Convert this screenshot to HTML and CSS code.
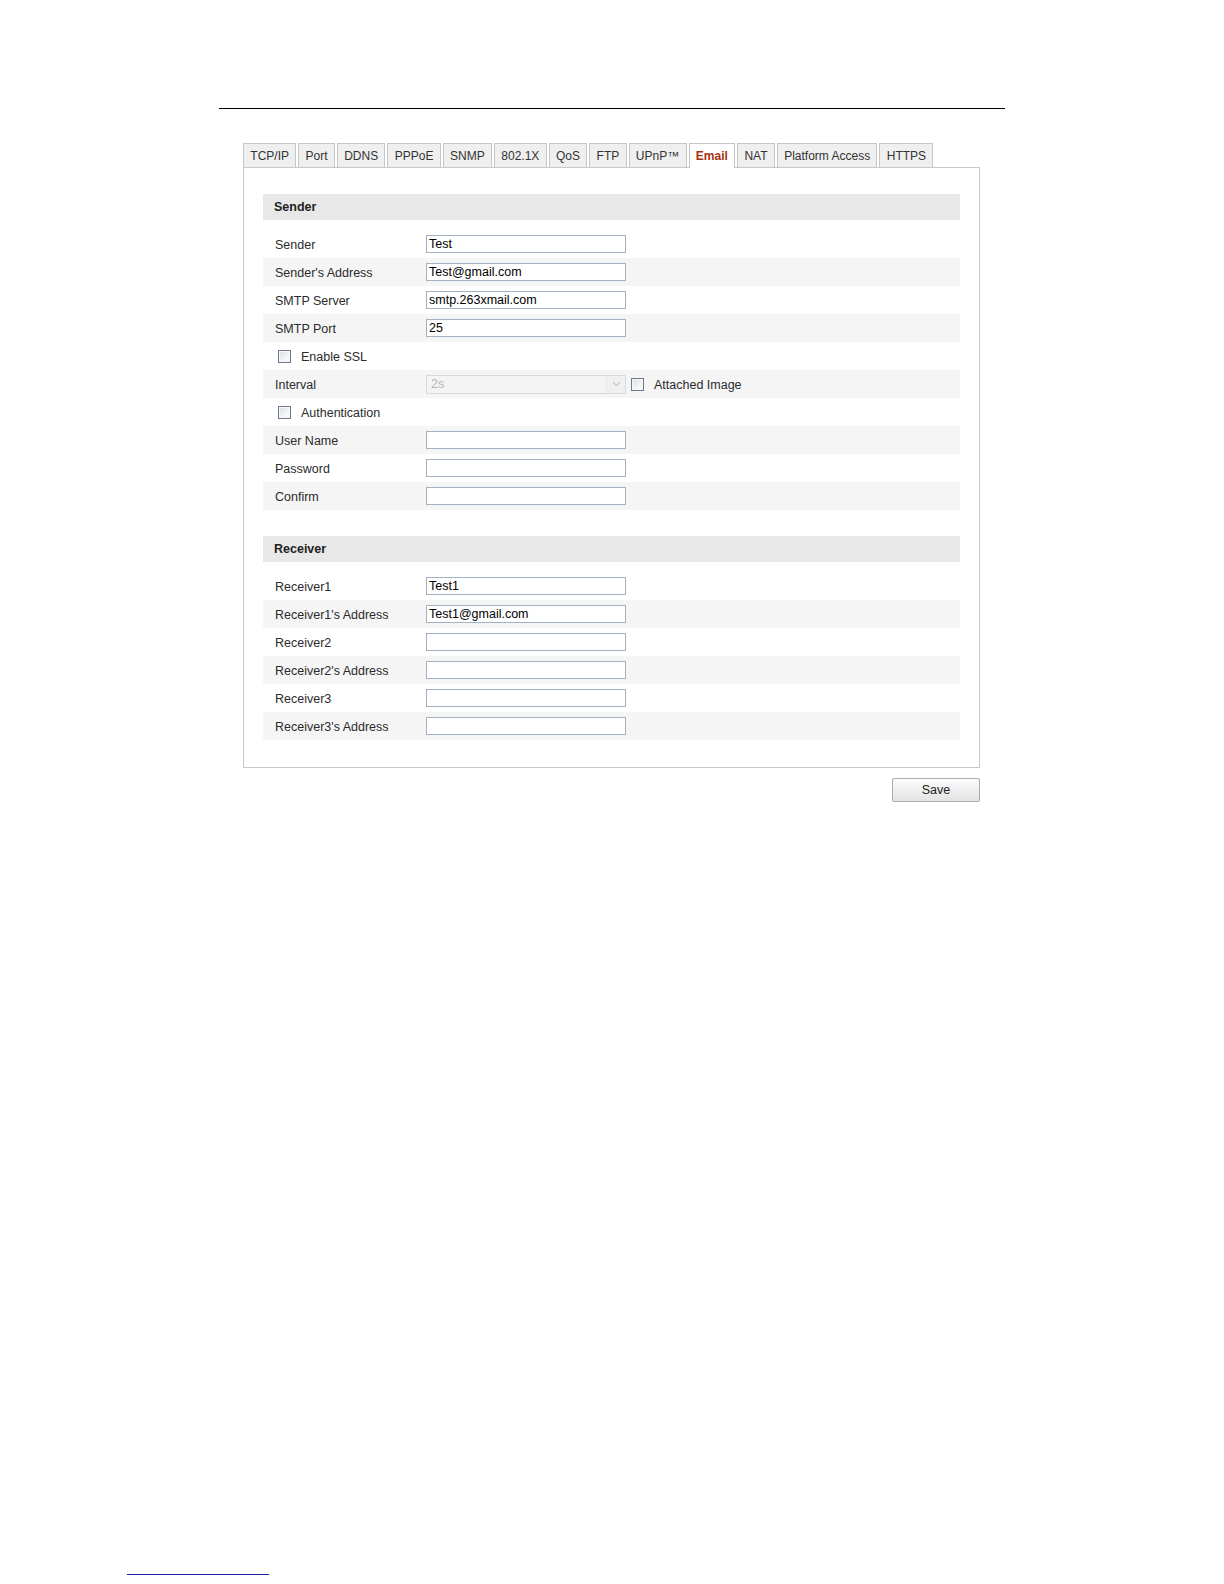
FILE: index.html
```html
<!DOCTYPE html>
<html lang="en">
<head>
<meta charset="utf-8">
<title>Email</title>
<link rel="stylesheet" href="styles.css">
</head>
<body>
<div class="page">
  <div class="top-rule"></div>

  <div class="config">
    <div class="tabs">
      <div class="tab">TCP/IP</div>
      <div class="tab">Port</div>
      <div class="tab">DDNS</div>
      <div class="tab">PPPoE</div>
      <div class="tab">SNMP</div>
      <div class="tab">802.1X</div>
      <div class="tab">QoS</div>
      <div class="tab">FTP</div>
      <div class="tab">UPnP™</div>
      <div class="tab active">Email</div>
      <div class="tab">NAT</div>
      <div class="tab">Platform Access</div>
      <div class="tab">HTTPS</div>
    </div>

    <div class="panel">
      <div class="section">
        <div class="section-head">Sender</div>
        <div class="row"><span class="label">Sender</span><span class="input">Test</span></div>
        <div class="row alt"><span class="label">Sender's Address</span><span class="input">Test@gmail.com</span></div>
        <div class="row"><span class="label">SMTP Server</span><span class="input">smtp.263xmail.com</span></div>
        <div class="row alt"><span class="label">SMTP Port</span><span class="input">25</span></div>
        <div class="row check-row"><span class="checkbox"></span><span class="check-label">Enable SSL</span></div>
        <div class="row alt">
          <span class="label">Interval</span>
          <span class="select"><span class="select-value">2s</span><span class="select-arrow"><svg width="9" height="6" viewBox="0 0 9 6"><path d="M1 1 L4.5 4.5 L8 1" fill="none" stroke="#c9c9c9" stroke-width="1.3"/></svg></span></span>
          <span class="checkbox inline"></span><span class="check-label">Attached Image</span>
        </div>
        <div class="row check-row"><span class="checkbox"></span><span class="check-label">Authentication</span></div>
        <div class="row alt"><span class="label">User Name</span><span class="input"></span></div>
        <div class="row"><span class="label">Password</span><span class="input"></span></div>
        <div class="row alt"><span class="label">Confirm</span><span class="input"></span></div>
      </div>

      <div class="section">
        <div class="section-head">Receiver</div>
        <div class="row"><span class="label">Receiver1</span><span class="input">Test1</span></div>
        <div class="row alt"><span class="label">Receiver1's Address</span><span class="input">Test1@gmail.com</span></div>
        <div class="row"><span class="label">Receiver2</span><span class="input"></span></div>
        <div class="row alt"><span class="label">Receiver2's Address</span><span class="input"></span></div>
        <div class="row"><span class="label">Receiver3</span><span class="input"></span></div>
        <div class="row alt"><span class="label">Receiver3's Address</span><span class="input"></span></div>
      </div>
    </div>

    <div class="actions">
      <button class="save-btn" type="button">Save</button>
    </div>
  </div>

  <div class="footnote-rule"></div>
</div>
</body>
</html>
```

FILE: styles.css
```css
html, body {
  margin: 0;
  padding: 0;
  background: #fff;
}

body {
  font-family: "Liberation Sans", Arial, sans-serif;
  font-size: 12.5px;
  color: #2b2b2b;
}

.page {
  min-height: 1584px;
  display: flex;
  flex-direction: column;
  box-sizing: border-box;
}

.top-rule {
  margin: 108px 0 0 219px;
  width: 786px;
  height: 1px;
  background: #000;
}

.config {
  margin: 34px 0 0 243px;
  width: 737px;
}

.tabs {
  display: flex;
  gap: 2px;
  align-items: flex-end;
}

.tab {
  height: 23px;
  line-height: 24px;
  padding: 0 6.3px;
  border: 1px solid #c6c6c6;
  border-bottom: 0;
  background: #efefef;
  color: #333;
  font-size: 12px;
  white-space: nowrap;
}

.tab.active {
  position: relative;
  height: 24px;
  margin-bottom: -1px;
  background: #fff;
  color: #a8300f;
  font-weight: bold;
}

.panel {
  border: 1px solid #c8c8c8;
  padding: 26px 19px 27px;
  background: #fff;
}

.section + .section {
  margin-top: 26px;
}

.section-head {
  height: 26px;
  line-height: 27px;
  padding-left: 11px;
  margin-bottom: 10px;
  background: #e8e8e8;
  font-weight: bold;
  color: #222;
}

.row {
  height: 28px;
  display: flex;
  align-items: center;
  padding-left: 12px;
}

.row.alt {
  background: #f5f5f5;
}

.row.check-row {
  padding-left: 15px;
}

.label {
  width: 151px;
  flex: none;
  padding-top: 1px;
}

.input {
  box-sizing: border-box;
  width: 200px;
  height: 18px;
  line-height: 16px;
  padding: 0 2px;
  border: 1px solid #a4b1c2;
  background: #fff;
  color: #000;
  flex: none;
}

.select {
  box-sizing: border-box;
  width: 200px;
  height: 19px;
  display: flex;
  border: 1px solid #dadada;
  background: #f4f4f4;
  flex: none;
}

.select-value {
  flex: 1;
  line-height: 17px;
  padding-left: 4px;
  color: #b4b4b4;
}

.select-arrow {
  width: 18px;
  display: flex;
  align-items: center;
  justify-content: center;
  border-left: 1px solid #e8e8e8;
  background: #f0f0f0;
}

.checkbox {
  box-sizing: border-box;
  width: 13px;
  height: 13px;
  flex: none;
  border: 1px solid #6e7b8e;
  background: linear-gradient(135deg, #dadde2 0%, #f3f4f5 60%, #ffffff 100%);
  box-shadow: inset 0 0 0 1px #f6f6f6;
}

.checkbox.inline {
  margin-left: 5px;
}

.check-label {
  margin-left: 10px;
  padding-top: 1px;
}

.actions {
  display: flex;
  justify-content: flex-end;
  margin-top: 10px;
}

.save-btn {
  width: 88px;
  height: 24px;
  padding: 0;
  border: 1px solid #ababab;
  border-radius: 2px;
  background: linear-gradient(#fcfcfc, #e3e3e3);
  font-family: "Liberation Sans", Arial, sans-serif;
  font-size: 12.5px;
  color: #222;
}

.footnote-rule {
  margin: auto 0 9px 127px;
  width: 142px;
  height: 1px;
  background: #1f1f9c;
}
```
